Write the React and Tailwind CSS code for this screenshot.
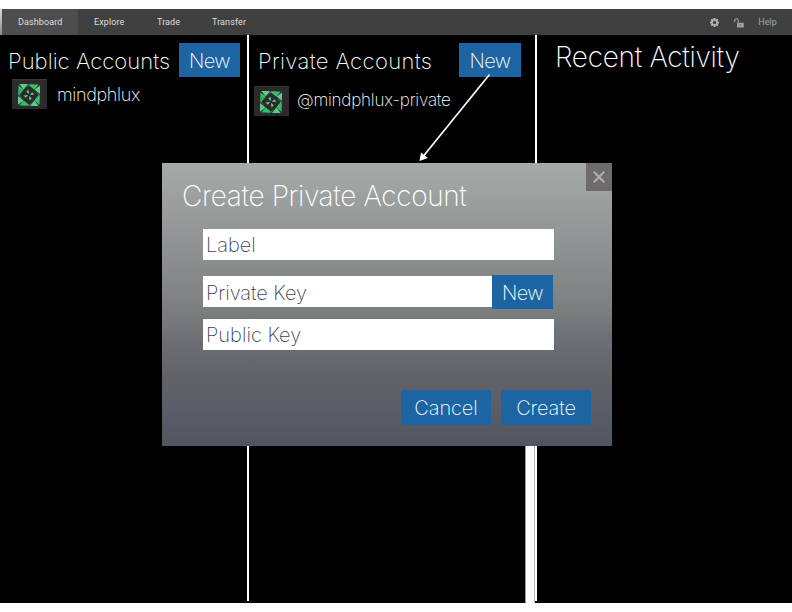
import React from "react";

const light = "font-['Inter','Liberation_Sans',sans-serif] font-[240] whitespace-nowrap";

function Identicon() {
  return (
    <div className="h-[30px] w-[35px] shrink-0 border-t border-[#383838] bg-[#2b2b2b] pl-[6px] pt-[4px]">
      <svg width="22" height="22" viewBox="0 0 24 24">
        <g fill="#3fbf73">
          {[0, 90, 180, 270].map((a) => (
            <g key={a} transform={`rotate(${a} 12 12)`}>
              <path d="M0.500 1.500L6 6L0.500 12Z" fill="#36c06c" />
              <path d="M1.500 0H11L6 6Z" fill="#5fcb8a" />
              <path d="M12 0.500H17.500V6L12 1.500L6 6Z" fill="#2fae60" />
              <path d="M12 11L11.500 6L9 8.500Z" fill="#62cf8e" />
            </g>
          ))}
        </g>
      </svg>
    </div>
  );
}

function BlueButton({ className, children }) {
  return (
    <button className={`${light} flex shrink-0 items-center justify-center bg-[#1d65a2] pt-px text-white ${className}`}>
      {children}
    </button>
  );
}

function TopBar() {
  return (
    <nav className="flex h-[26px] items-stretch bg-[#404040] font-['Roboto',sans-serif] text-[9px] font-normal tracking-[0.1px] text-[#dedede]">
      <div className="w-[2px] bg-gradient-to-b from-[#d8d8d8] to-[#8c8c8c]" />
      <div className="flex w-[76px] items-center bg-[#4d4d4d] pl-[16px] pt-[2px]">Dashboard</div>
      <div className="flex w-[63px] items-center pl-[16px] pt-[2px]">Explore</div>
      <div className="flex w-[56px] items-center pl-[16px] pt-[2px]">Trade</div>
      <div className="flex items-center pl-[15px] pt-[2px]">Transfer</div>
      <div className="ml-auto flex items-center pr-[15px] text-[#a4a4a4]">
        <svg className="mr-[15px]" width="9" height="9" viewBox="0 0 18 18">
          <g fill="#b4b4b4">
            {[0, 45, 90, 135].map((a) => (
              <rect key={a} x="7.2" y="0" width="3.6" height="18" rx="0.5" transform={`rotate(${a} 9 9)`} />
            ))}
            <circle cx="9" cy="9" r="6.4" />
          </g>
          <circle cx="9" cy="9" r="3.3" fill="#404040" />
        </svg>
        <svg className="mt-px mr-[14px]" width="10" height="10" viewBox="0 0 20 20">
          <path d="M1.500 8V5a3.500 3.500 0 0 1 7 0v5" fill="none" stroke="#a0a0a0" strokeWidth="2.200" />
          <rect x="6" y="9.500" width="13.500" height="9.500" rx="1" fill="#a0a0a0" />
          <rect x="11.500" y="12.500" width="2.500" height="3" fill="#707070" />
        </svg>
        <span className="pt-[2px]">Help</span>
      </div>
    </nav>
  );
}

function Field({ children, className }) {
  return (
    <div className={`${light} flex h-[31px] items-center bg-white pl-[3px] text-[20px] text-[#3f4450] ${className}`}>
      {children}
    </div>
  );
}

function Dialog() {
  return (
    <section className="absolute left-[162px] top-[163px] h-[283px] w-[450px] bg-[linear-gradient(180deg,#a6aaa7_0%,#8f9394_28%,#7d8182_50%,#686b6f_66%,#606366_76%,#5a5e68_87%,#50555f_100%)]">
      <div className="flex justify-between">
        <h2 className={`${light} pl-[20px] pt-[16px] text-[28px] leading-[34px] tracking-[-0.36px] text-white`}>
          Create Private Account
        </h2>
        <button className="flex h-[28px] w-[26px] items-center justify-center bg-[#6d6b6c]">
          <svg width="12" height="12" viewBox="0 0 12 12">
            <path d="M0.8 0.8L11.2 11.2M11.2 0.8L0.8 11.2" stroke="#b0b0b0" strokeWidth="2" />
          </svg>
        </button>
      </div>
      <div className="mt-[16px] pl-[41px]">
        <Field className="w-[351px] pt-px">Label</Field>
        <div className="mt-[15px] flex h-[34px] items-start">
          <Field className="mt-px w-[289px] pt-[3px] tracking-[-0.05px]">Private Key</Field>
          <BlueButton className="h-[34px] w-[61px] text-[20px] tracking-[-0.5px]">New</BlueButton>
        </div>
        <Field className="mt-[10px] w-[351px] pt-px">Public Key</Field>
      </div>
      <div className="mt-[40px] flex justify-end gap-[10px] pr-[21px]">
        <BlueButton className="h-[35px] w-[90px] text-[20px] tracking-[-0.1px]">Cancel</BlueButton>
        <BlueButton className="h-[35px] w-[90px] text-[20px] tracking-[-0.1px]">Create</BlueButton>
      </div>
    </section>
  );
}

export default function App() {
  return (
    <div className="relative h-[612px] w-[792px] overflow-hidden bg-white pt-[9px]">
      <TopBar />
      <main className="flex h-[568px] bg-black text-white">
        <section className="w-[247px]">
          <div className="flex pl-[8px] pt-[8px]">
            <h1 className={`${light} w-[171px] pt-[3px] text-[22px] leading-[30px] tracking-[0.05px]`}>Public Accounts</h1>
            <BlueButton className="h-[34px] w-[61px] text-[20px] tracking-[-0.5px]">New</BlueButton>
          </div>
          <div className="mt-[2px] flex pl-[12px]">
            <Identicon />
            <span className={`${light} pl-[10px] pt-[3px] text-[18px] leading-[26px] tracking-[-0.35px]`}>mindphlux</span>
          </div>
        </section>
        <div className="h-[566px] w-[2px] bg-white" />
        <section className="w-[276px]">
          <div className="flex pl-[9px] pt-[8px]">
            <h1 className={`${light} w-[201px] pt-[3px] text-[22px] leading-[30px] tracking-[0.38px]`}>Private Accounts</h1>
            <BlueButton className="h-[34px] w-[62px] text-[20px] tracking-[-0.5px]">New</BlueButton>
          </div>
          <div className="mt-[9px] flex pl-[5px]">
            <Identicon />
            <span className={`${light} pl-[8px] pt-px text-[17px] leading-[26px] tracking-[-0.2px]`}>@mindphlux-private</span>
          </div>
        </section>
        <div className="mt-[411px] h-[157px] w-[10px] border-x border-l-[#999] border-r-[#b5b5b5] bg-[#fbfbfb]" />
        <div className="h-[566px] w-[2px] bg-white" />
        <section className="flex-1">
          <h1 className={`${light} pl-[18px] pt-[4px] text-[28px] leading-[36px] tracking-[-0.3px]`}>Recent Activity</h1>
        </section>
      </main>
      <svg className="absolute left-[410px] top-[68px]" width="90" height="96" viewBox="410 68 90 96">
        <path d="M489.500 74.500L423.500 156" stroke="#fff" strokeWidth="1.7" />
        <path d="M419.500 161L421 152.500L428 158Z" fill="#fff" />
      </svg>
      <Dialog />
    </div>
  );
}
